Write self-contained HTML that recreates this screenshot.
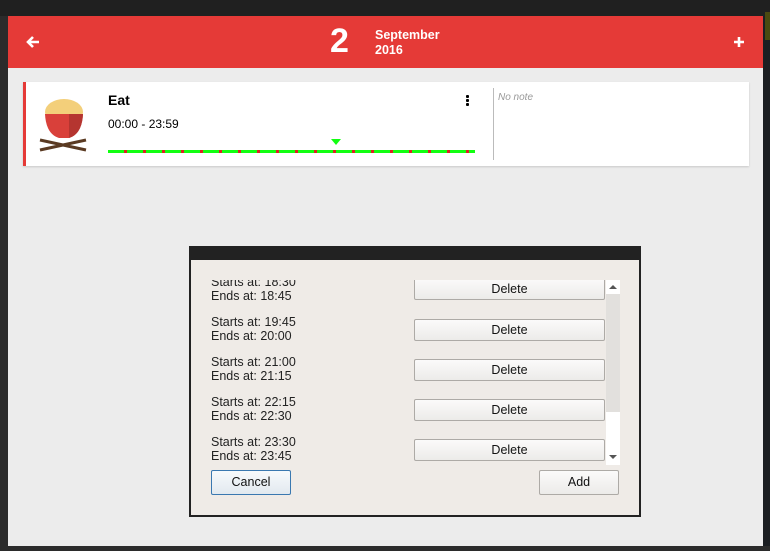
<!DOCTYPE html>
<html><head><meta charset="utf-8"><style>
*{margin:0;padding:0;box-sizing:border-box}
body{width:770px;height:551px;background:#2b2b2b;position:relative;overflow:hidden;font-family:"Liberation Sans",sans-serif}
.abs{position:absolute}
.win{left:8px;top:16px;width:755px;height:530px;background:#ececec}
.hdr{left:8px;top:16px;width:755px;height:52px;background:#e53a37;color:#fff}
.card{left:23px;top:82px;width:726px;height:84px;background:#fff;border-left:3px solid #e53a37;box-shadow:0 1px 2px rgba(0,0,0,.15)}
.dlg{left:189px;top:246px;width:452px;height:271px;background:#efebe7;border:2px solid #222}
.btn{position:absolute;background:linear-gradient(#fbfafa,#ecebe9);border:1px solid #adaaa6;border-radius:2px;font-size:12.5px;color:#111;text-align:center}
.t{position:absolute;font-size:12.5px;color:#222;line-height:14px}
</style></head><body>
<div class="abs" style="left:0;top:0;width:770px;height:16px;background:#202020"></div>
<div class="abs" style="left:763px;top:16px;width:7px;height:530px;background:#1b1e22"></div>
<div class="abs" style="left:765px;top:12px;width:5px;height:28px;background:#4a4a10"></div>
<div class="abs win"></div>
<div class="abs hdr">
 <svg class="abs" style="left:18px;top:19px" width="14" height="14" viewBox="0 0 14 14"><path d="M13 7H2M7 2L2 7L7 12" stroke="#fff" stroke-width="2.6" fill="none"/></svg>
 <div class="abs" style="left:322px;top:6px;font-size:34px;font-weight:bold">2</div>
 <div class="abs" style="left:367px;top:12px;font-size:12.5px;font-weight:bold;line-height:15px">September<br>2016</div>
 <svg class="abs" style="left:725px;top:20px" width="12" height="12" viewBox="0 0 12 12"><path d="M6 1V11M1 6H11" stroke="#fff" stroke-width="2.6"/></svg>
</div>
<div class="abs card">
 <svg class="abs" style="left:10px;top:12px" width="56" height="58" viewBox="0 0 56 58">
  <ellipse cx="28" cy="18" rx="19" ry="13" fill="#f3cf7a"/>
  <path d="M9 20 H47 Q46 40 33 44 H23 Q10 40 9 20Z" fill="#d9403a"/>
  <path d="M33 20 H47 Q46 40 33 44Z" fill="#b53530"/>
  <path d="M4 46 L50 56 M4 56 L50 46" stroke="#5a3a22" stroke-width="3"/>
 </svg>
 <div class="abs" style="left:82px;top:10px;font-size:14px;font-weight:bold">Eat</div>
 <div class="abs" style="left:82px;top:35px;font-size:12px">00:00 - 23:59</div>
 <div class="abs" style="left:440px;top:13px;width:3px;height:3px;background:#000;box-shadow:0 4px #000,0 8px #000;border-radius:1px"></div>
 <div class="abs" style="left:305px;top:57px;width:0;height:0;border-left:5px solid transparent;border-right:5px solid transparent;border-top:6px solid #1f1"></div>
 <div class="abs" style="left:82px;top:68px;width:367px;height:3px;background:repeating-linear-gradient(90deg,#1f1 0 16px,#d22 16px 19px)"></div>
 <div class="abs" style="left:467px;top:6px;width:1px;height:72px;background:#bbb"></div>
 <div class="abs" style="left:472px;top:10px;font-size:10px;font-style:italic;color:#999">No note</div>
</div>
<div class="abs dlg">
 <div class="abs" style="left:0;top:0;width:448px;height:12px;background:#222"></div>
 <div class="abs" style="left:20px;top:32px;width:396px;height:185px;overflow:hidden">
  <div class="t" style="left:0;top:-5px">Starts at: 18:30<br>Ends at: 18:45</div>
  <div class="t" style="left:0;top:35px">Starts at: 19:45<br>Ends at: 20:00</div>
  <div class="t" style="left:0;top:75px">Starts at: 21:00<br>Ends at: 21:15</div>
  <div class="t" style="left:0;top:115px">Starts at: 22:15<br>Ends at: 22:30</div>
  <div class="t" style="left:0;top:155px">Starts at: 23:30<br>Ends at: 23:45</div>
  <div class="btn" style="left:203px;top:-2px;width:191px;height:22px;line-height:20px">Delete</div>
  <div class="btn" style="left:203px;top:39px;width:191px;height:22px;line-height:20px">Delete</div>
  <div class="btn" style="left:203px;top:79px;width:191px;height:22px;line-height:20px">Delete</div>
  <div class="btn" style="left:203px;top:119px;width:191px;height:22px;line-height:20px">Delete</div>
  <div class="btn" style="left:203px;top:159px;width:191px;height:22px;line-height:20px">Delete</div>
 </div>
 <div class="abs" style="left:415px;top:32px;width:14px;height:185px;background:#fff">
  <div class="abs" style="left:0;top:14px;width:14px;height:118px;background:#e2e0dd"></div>
  <div class="abs" style="left:3px;top:5px;border-left:4px solid transparent;border-right:4px solid transparent;border-bottom:4px solid #555"></div>
  <div class="abs" style="left:3px;top:175px;border-left:4px solid transparent;border-right:4px solid transparent;border-top:4px solid #555"></div>
 </div>
 <div class="btn" style="left:20px;top:222px;width:80px;height:25px;line-height:23px;border-color:#3a78b0;background:linear-gradient(#f7fafc,#e2e9ef)">Cancel</div>
 <div class="btn" style="left:348px;top:222px;width:80px;height:25px;line-height:23px">Add</div>
</div>
</body></html>
